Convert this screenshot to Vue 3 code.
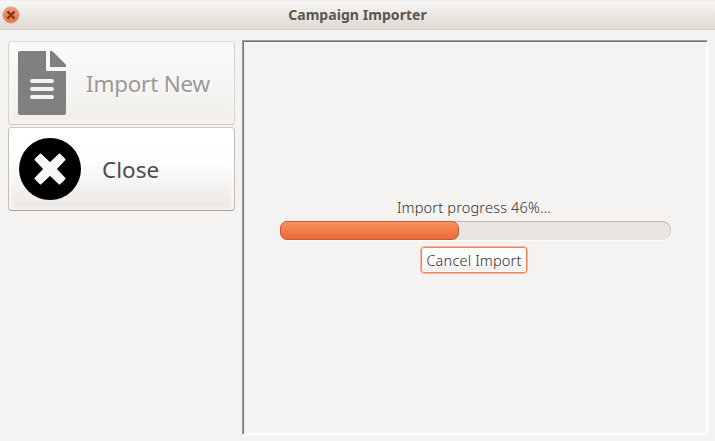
<script setup>
import { ref } from 'vue'

const progress = ref(46)
</script>

<template>
  <div class="window">
    <header class="titlebar">
      <button class="window-close" aria-label="Close window">
        <svg width="18" height="18" viewBox="0 0 18 18">
          <defs>
            <linearGradient id="orb" x1="0" y1="0" x2="0" y2="1">
              <stop offset="0" stop-color="#f79b78" />
              <stop offset="1" stop-color="#ee6c37" />
            </linearGradient>
          </defs>
          <circle cx="9" cy="9" r="8.1" fill="url(#orb)" stroke="#b9aea5" stroke-width="1" />
          <path d="M5.400 5.400 L12.600 12.600 M12.600 5.400 L5.400 12.600" stroke="#7e3b20" stroke-width="2.3" />
        </svg>
      </button>
      <span class="title">Campaign Importer</span>
    </header>
    <main class="content">
      <nav class="sidebar">
        <button class="action disabled" disabled>
          <svg class="file-icon" width="48" height="64" viewBox="0 0 48 64">
            <path fill="#808080" d="M2 0H28V18.500Q28 20 29.500 20H48V62Q48 64 46 64H2Q0 64 0 62V2Q0 0 2 0Z" />
            <path fill="#808080" d="M32 0H33.500Q34.300 0 35 .7L47.300 13Q48 13.700 48 14.500V16H32Z" />
            <path stroke="#f6f4f2" stroke-width="4" stroke-linecap="round" d="M14 30H34M14 38H34M14 46H34" />
          </svg>
          <span class="label-import">Import New</span>
        </button>
        <button class="action">
          <svg class="close-icon" width="62" height="62" viewBox="0 0 62 62">
            <circle cx="31" cy="31" r="31" />
            <path
              d="M16.500 21.500L21.500 16.500L31 25.500L40.500 16.500L45.500 21.500L36.500 31L45.500 40.500L40.500 45.500L31 36.500L21.500 45.500L16.500 40.500L25.500 31Z"
              fill="#f8f7f6" stroke="#f8f7f6" stroke-width="2" stroke-linejoin="round"
            />
          </svg>
          <span class="label-close">Close</span>
        </button>
      </nav>
      <section class="panel">
        <div class="status">Import progress {{ progress }}%...</div>
        <div class="track">
          <div class="fill" :style="{ width: progress + '%' }"></div>
        </div>
        <button class="cancel"><span>Cancel Import</span></button>
      </section>
    </main>
  </div>
</template>

<style>
body {
  margin: 0;
  background: #f5f3f2;
}
</style>

<style scoped>
.window {
  width: 715px;
  height: 441px;
  box-sizing: border-box;
  overflow: hidden;
  background: #f5f3f2;
  color: #4c4c4c;
  font-family: "Noto Sans", "Open Sans", sans-serif;
}
button {
  margin: 0;
  padding: 0;
  font: inherit;
  color: inherit;
  box-sizing: border-box;
}
svg {
  display: block;
  flex: none;
  fill: #000;
}
.titlebar {
  height: 30px;
  box-sizing: border-box;
  display: grid;
  grid-template-columns: 20px 1fr 20px;
  align-items: center;
  border-top: 1px solid #eeecea;
  border-bottom: 1px solid #d8cfc4;
  background: linear-gradient(#f8f7f5, #ded8d0);
}
.window-close {
  width: 18px;
  height: 18px;
  margin-left: 2px;
  border: 0;
  background: none;
}
.title {
  text-align: center;
  font-size: 14px;
  font-weight: 700;
  line-height: 20px;
  letter-spacing: 0.06px;
  color: #5a5653;
  white-space: nowrap;
}
.content {
  display: flex;
  gap: 7px;
  height: 411px;
  box-sizing: border-box;
  padding: 10px 7px 6px 8px;
}
.sidebar {
  width: 227px;
  flex: none;
  padding-top: 1px;
  display: flex;
  flex-direction: column;
  gap: 2px;
}
.action {
  height: 84px;
  display: flex;
  align-items: center;
  border: 1px solid;
  border-color: #cdc6bf #c5bdb5 #aaa198;
  border-radius: 4px;
  background: linear-gradient(#fff 0%, #fefefe 40%, #f5f3f2 70%, #eae6e3 100%);
  box-shadow: inset 0 0 5px 1px #fff;
  font-size: 23px;
  white-space: nowrap;
}
.action.disabled {
  border-color: #dedad6 #d8d2cd #cbc3bc;
  background: linear-gradient(#fbfafa, #f5f3f1 65%, #f0edea);
  box-shadow: inset 0 0 4px 1px #f9f8f7;
  color: #999;
  text-shadow: 1px 1px 0 #fff;
}
.file-icon {
  margin-left: 9px;
}
.close-icon {
  margin-left: 10px;
}
.label-import {
  margin-left: 20px;
  padding-top: 1px;
  font-size: 22.5px;
  letter-spacing: -0.25px;
}
.label-close {
  margin-left: 21px;
  font-size: 22.5px;
}
.panel {
  width: 466px;
  box-sizing: border-box;
  display: flex;
  flex-direction: column;
  align-items: center;
  padding-top: 156px;
  border: 1px solid;
  border-color: #a09f9e #fff #fff #a09f9e;
  box-shadow: inset 1px 1px 0 #747372, inset -1px -1px 0 #fff;
}
.status {
  height: 20px;
  margin-right: 2px;
  line-height: 20px;
  font-size: 14.5px;
  font-weight: 300;
  letter-spacing: 0.18px;
  color: #303030;
  white-space: nowrap;
}
.track {
  width: 391px;
  height: 19px;
  margin-top: 4px;
  box-sizing: border-box;
  border-radius: 9px;
  background: #e9e6e1;
  box-shadow: inset 0 1px 0 #bdb5ad, inset -1px 0 0 #d7d1ca, 0 1px 0 #fff;
}
.fill {
  height: 19px;
  box-sizing: border-box;
  border: 1px solid #c65a33;
  border-radius: 7px;
  background: linear-gradient(#fa8e61, #e96a37);
  box-shadow: inset 0 1px 0 #fb966b;
}
.cancel {
  width: 108px;
  height: 28px;
  margin-top: 6px;
  margin-right: 2px;
  display: flex;
  justify-content: center;
  align-items: center;
  border: 1px solid #f5b9a2;
  border-radius: 4px;
  background: linear-gradient(#fff, #fdfdfd 45%, #efecea);
  box-shadow: inset 0 0 0 1px #ee8158, inset 0 0 2px 2px #fff;
  font-size: 14.5px;
  font-weight: 300;
  letter-spacing: 0.18px;
  color: #303030;
  white-space: nowrap;
}
</style>
